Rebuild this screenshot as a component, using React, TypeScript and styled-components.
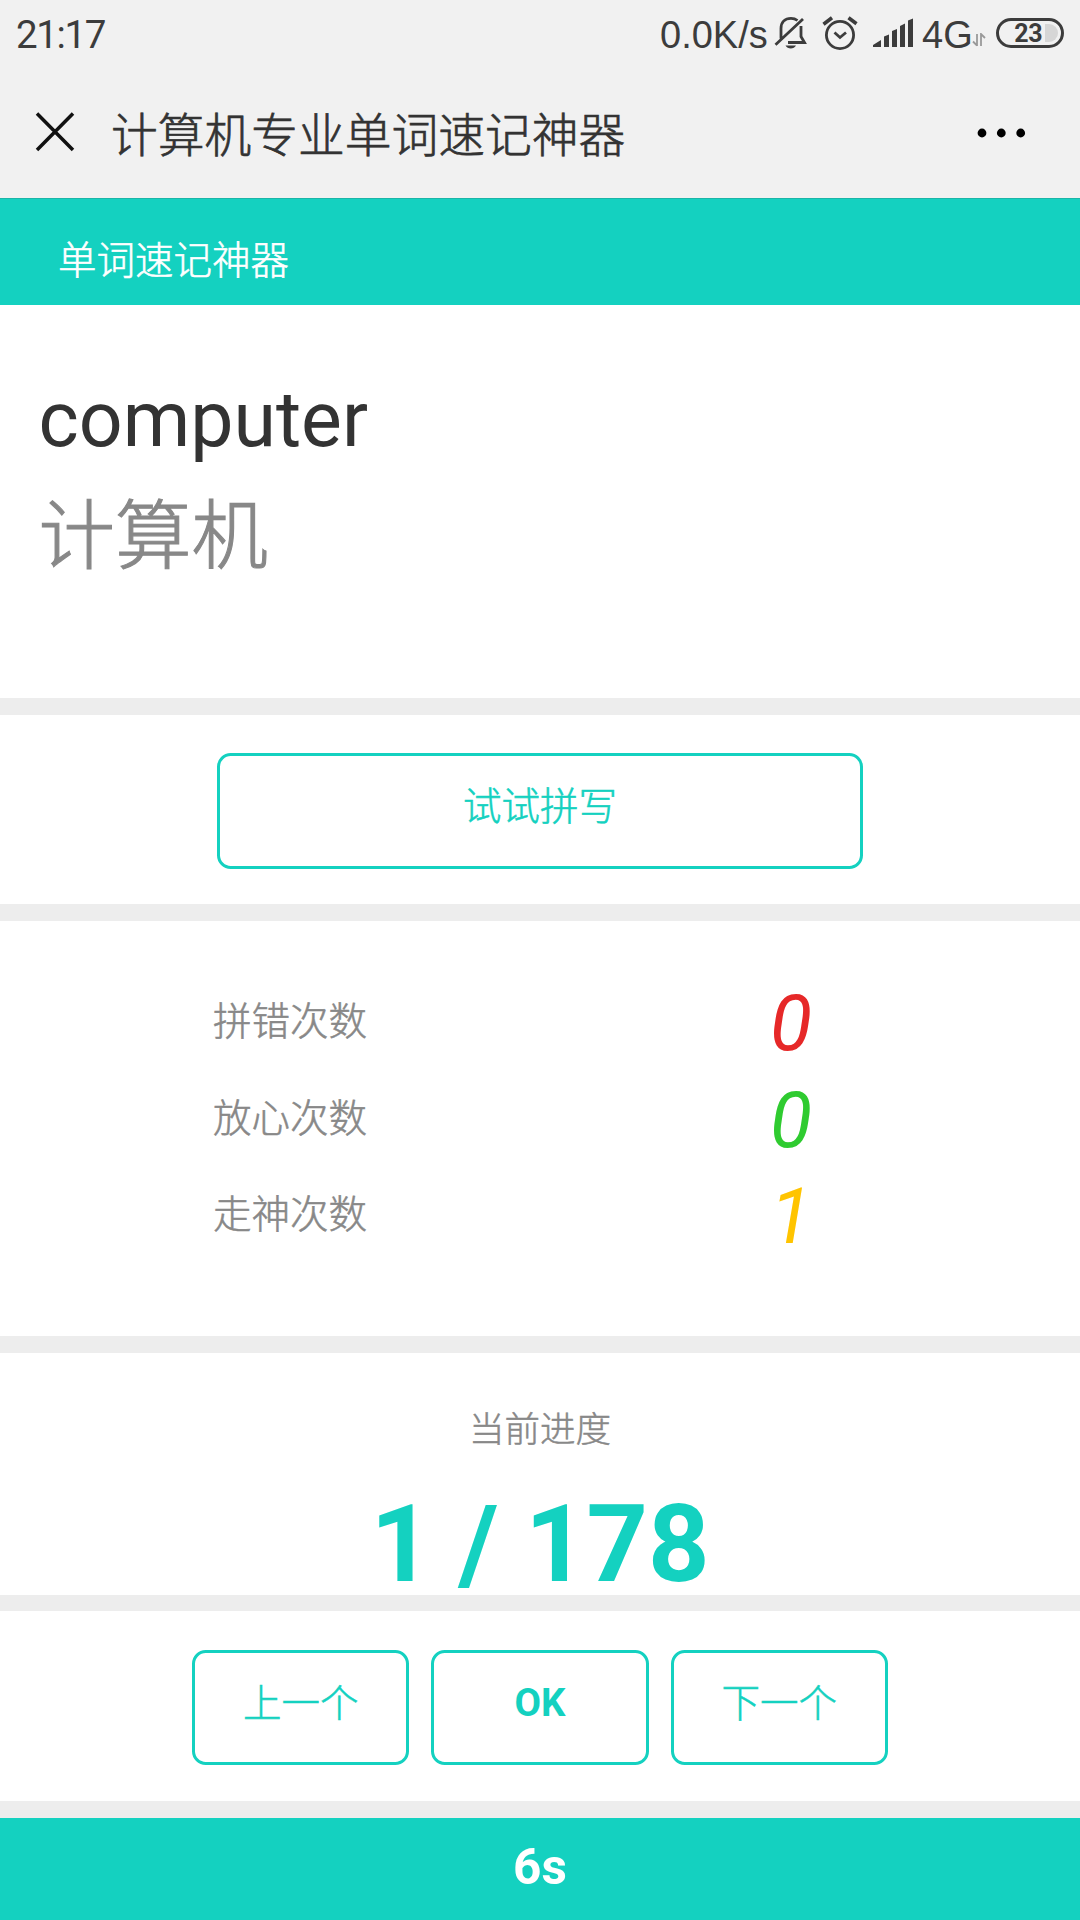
import React from 'react';
import styled, { createGlobalStyle } from 'styled-components';

const TEAL = '#14d1c0';

const GlobalStyle = createGlobalStyle`
  * { box-sizing: border-box; }
  html, body { margin: 0; padding: 0; background: #fff; }
  body {
    width: 1080px;
    height: 1920px;
    overflow: hidden;
    font-family: Roboto, 'Noto Sans CJK SC', sans-serif;
    font-size: 38.5px;
    color: #888;
  }
`;

const Screen = styled.div`
  width: 1080px;
  height: 1920px;
  display: flex;
  flex-direction: column;
  background: #fff;
`;

const SystemArea = styled.div`
  height: 198px;
  flex: none;
  background: #f1f1f1;
  color: #3c3c3c;
`;

const StatusBar = styled.div`
  height: 66px;
  display: flex;
  align-items: center;
  padding: 0 16px 0 16px;
  font-size: 38.5px;
  line-height: 64px;
  white-space: nowrap;
`;

const Clock = styled.span`
  flex: 1;
  padding-top: 4px;
  letter-spacing: -1.4px;
`;

const Carrier = styled.span<{ $width: number }>`
  width: ${p => p.$width}px;
  padding-top: 4px;
  font-family: 'Liberation Sans', Arial, sans-serif;
  font-size: 38px;
`;

const StatusGlyph = styled.svg<{ $gap?: number; $drop?: number }>`
  flex: none;
  display: block;
  margin-right: ${p => p.$gap ?? 0}px;
  margin-top: ${p => p.$drop ?? 0}px;
`;

const Battery = styled.div`
  width: 68px;
  height: 30px;
  border: 3px solid #3c3c3c;
  border-radius: 15px;
  padding: 0 3px 0 0;
  display: flex;
  justify-content: flex-end;
  align-items: center;
  gap: 3px;
  font-size: 25px;
  font-weight: 700;
  line-height: 24px;
  letter-spacing: -0.5px;
`;

const BatteryLevel = styled.span`
  padding-top: 2px;
`;

const BatteryRest = styled.span`
  width: 13px;
  height: 18px;
  border-radius: 0 9px 9px 0;
  background: #d6d6d6;
`;

const TitleBar = styled.div`
  height: 132px;
  display: flex;
  align-items: center;
  padding: 0 50px 0 35px;
`;

const PageTitle = styled.h1`
  margin: 7px 0 0 36px;
  flex: 1;
  font-size: 46.75px;
  font-weight: 300;
  -webkit-text-stroke: 0.014em currentColor;
  line-height: 60px;
  color: #333;
`;

const AppHeader = styled.header`
  height: 107px;
  flex: none;
  background: ${TEAL};
  border-top: 1px solid #1bb5a8;
  padding: 34px 58px 0;
  color: #fff;
  font-weight: 300;
  -webkit-text-stroke: 0.014em currentColor;
  line-height: 56px;
`;

const Section = styled.section<{ $height: number }>`
  height: ${p => p.$height}px;
  flex: none;
`;

const Divider = styled.div`
  height: 16.5px;
  flex: none;
  background: #ededed;
`;

const WordSection = styled(Section)`
  padding: 60px 38.5px 0;
  font-size: 77px;
`;

const Word = styled.div`
  color: #333;
  line-height: 110px;
`;

const Meaning = styled.div`
  margin-top: 4px;
  font-size: 76.500px;
  font-weight: 300;
  -webkit-text-stroke: 0.014em currentColor;
  line-height: 116px;
`;

const ButtonSection = styled(Section)`
  display: flex;
  justify-content: center;
  align-items: flex-start;
  gap: 22px;
  padding-top: 38.5px;
`;

const OutlineButton = styled.button<{ $width: number; $bold?: boolean }>`
  width: ${p => p.$width}px;
  height: 115.5px;
  padding: 0 0 ${p => (p.$bold ? 9 : 8)}px;
  background: #fff;
  border: 3px solid ${TEAL};
  border-radius: 13.75px;
  color: ${TEAL};
  font-family: inherit;
  font-size: 38.5px;
  font-weight: ${p => (p.$bold ? 700 : 300)};
  -webkit-text-stroke: ${p => (p.$bold ? 0 : 0.014)}em currentColor;
  line-height: 56px;
`;

const StatsSection = styled(Section)`
  padding: 55px 0 0 213px;
`;

const StatRow = styled.div`
  display: grid;
  grid-template-columns: 471px 214px;
  height: 96.4px;
  align-items: center;
`;

const StatLabel = styled.span`
  padding-bottom: 12px;
  font-weight: 300;
  -webkit-text-stroke: 0.014em currentColor;
`;

const StatValue = styled.em<{ $color: string }>`
  font-size: 77px;
  font-style: italic;
  line-height: 96px;
  text-align: center;
  color: ${p => p.$color};
`;

const ProgressSection = styled(Section)`
  text-align: center;
`;

const ProgressLabel = styled.div`
  padding-top: 49px;
  font-size: 35.5px;
  font-weight: 300;
  -webkit-text-stroke: 0.014em currentColor;
  line-height: 56px;
`;

const ProgressCount = styled.div`
  font-size: 107.25px;
  font-weight: 700;
  line-height: 100px;
  margin-top: 37px;
  color: ${TEAL};
`;

const TimerBar = styled.footer`
  flex: 1;
  background: ${TEAL};
  color: #fff;
  text-align: center;
  font-size: 49.5px;
  font-weight: 700;
  line-height: 98px;
`;

const stats = [
  { label: '拼错次数', value: 0, color: '#e62828' },
  { label: '放心次数', value: 0, color: '#2fcb30' },
  { label: '走神次数', value: 1, color: '#ffc400' },
];

export default function App() {
  return (
    <Screen>
      <GlobalStyle />
      <SystemArea>
        <StatusBar>
          <Clock>21:17</Clock>
          <Carrier $width={113}>0.0K/s</Carrier>
          <StatusGlyph $gap={13} width="36" height="36" viewBox="0 0 36 36" fill="none" stroke="#3c3c3c" strokeWidth="2.8">
            <path d="M8 23.500V13.500C8 6.800 12 3.400 18 3.400c2.500 0 4.500.6 6.500 2.100M2.500 29.800 30 4M28 11v10.500l3.500 6H15" />
            <path d="M12.500 30.500h10.500c-2 4-8.500 4-10.500 0Z" fill="#3c3c3c" stroke="none" />
          </StatusGlyph>
          <StatusGlyph $gap={15} width="36" height="36" viewBox="0 0 36 36" fill="none" stroke="#3c3c3c" strokeWidth="2.8">
            <circle cx="18" cy="20" r="13.600" />
            <path d="m12.500 17.500 5.500 5 6-5" />
            <path d="M1.500 9.200 10 2.800M34.500 8.800 26.500 2.800" strokeWidth="3.600" />
          </StatusGlyph>
          <StatusGlyph $gap={8} width="41" height="30" viewBox="0 0 41 30" fill="#3c3c3c">
            <path d="M0 29v-2l8-5v7ZM11 29V18.500l5-2V29ZM19 29V13l5-2v18ZM27 29V8l5-2.500V29ZM35 29V2.500l5-2V29Z" />
          </StatusGlyph>
          <Carrier $width={50}>4G</Carrier>
          <StatusGlyph $gap={10} $drop={14} width="14" height="14" viewBox="0 0 14 14" fill="none" stroke="#999" strokeWidth="1.800">
            <path d="M5 1v12M1 8.500l4 4M9 13V1l4 4" />
          </StatusGlyph>
          <Battery><BatteryLevel>23</BatteryLevel><BatteryRest /></Battery>
        </StatusBar>
        <TitleBar>
          <svg width="40" height="40" viewBox="0 0 40 40" stroke="#111" strokeWidth="3.500">
            <path d="M2 1.500 38 38M38 1.500 2 38" />
          </svg>
          <PageTitle>计算机专业单词速记神器</PageTitle>
          <svg width="54" height="12" viewBox="0 0 54 12" fill="#000">
            <circle cx="6" cy="7" r="4.400" /><circle cx="25.300" cy="7" r="4.400" /><circle cx="44.700" cy="7" r="4.400" />
          </svg>
        </TitleBar>
      </SystemArea>
      <AppHeader>单词速记神器</AppHeader>
      <WordSection $height={393.4}>
        <Word>computer</Word>
        <Meaning>计算机</Meaning>
      </WordSection>
      <Divider />
      <ButtonSection $height={189.6}>
        <OutlineButton $width={646}>试试拼写</OutlineButton>
      </ButtonSection>
      <Divider />
      <StatsSection $height={415.5}>
        {stats.map(s => (
          <StatRow key={s.label}>
            <StatLabel>{s.label}</StatLabel>
            <StatValue $color={s.color}>{s.value}</StatValue>
          </StatRow>
        ))}
      </StatsSection>
      <Divider />
      <ProgressSection $height={242}>
        <ProgressLabel>当前进度</ProgressLabel>
        <ProgressCount>1 / 178</ProgressCount>
      </ProgressSection>
      <Divider />
      <ButtonSection $height={189.6}>
        <OutlineButton $width={217.2}>上一个</OutlineButton>
        <OutlineButton $width={217.2} $bold>OK</OutlineButton>
        <OutlineButton $width={217.2}>下一个</OutlineButton>
      </ButtonSection>
      <Divider />
      <TimerBar>6s</TimerBar>
    </Screen>
  );
}
